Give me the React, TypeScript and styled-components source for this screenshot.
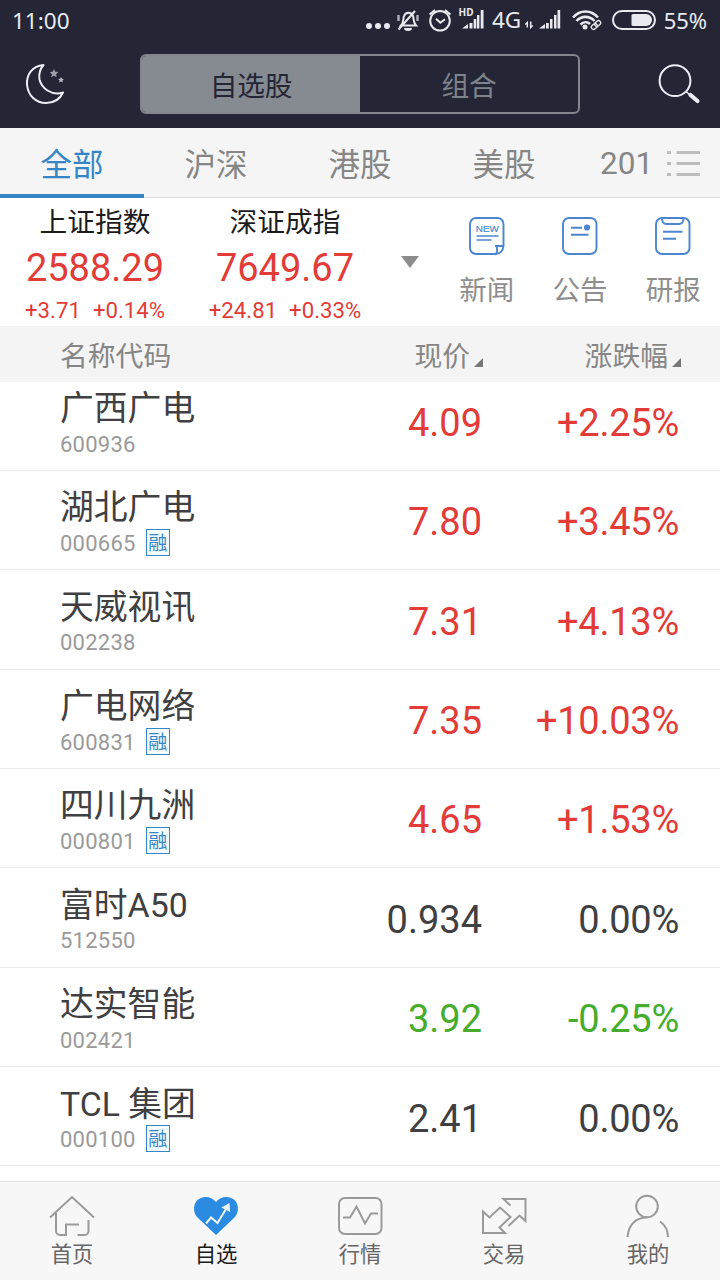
import React from 'react';
import styled, { createGlobalStyle } from 'styled-components';

const GlobalStyle = createGlobalStyle`
  * { box-sizing: border-box; }
  body { margin: 0; background: #fff; }
`;

const RED = '#e23b38';
const GREEN = '#45ad2b';
const DARK = '#404042';
const BLUE = '#3486c6';

const Screen = styled.div`
  width: 720px;
  height: 1280px;
  display: flex;
  flex-direction: column;
  overflow: hidden;
  background: #fff;
  font-family: Roboto, 'Noto Sans CJK SC', sans-serif;
`;

const StatusBar = styled.header`
  height: 40px;
  flex: none;
  display: flex;
  align-items: center;
  justify-content: space-between;
  padding: 2px 13px 0 12px;
  background: #242636;
  color: #e9eaf0;
  font: 22.5px/38px 'Noto Sans', sans-serif;
`;

const StatusIcons = styled.div`
  display: flex;
  align-items: center;
  height: 38px;
`;

const Battery = styled.span`
  height: 38px;
  font-size: 22px;
  line-height: 36px;
  letter-spacing: -0.1px;
  margin-left: 2px;
`;

const NavBar = styled.nav`
  height: 88px;
  flex: none;
  display: flex;
  align-items: center;
  padding: 0 17px 0 23px;
  background: #242636;
`;

const Segmented = styled.div`
  display: flex;
  flex: none;
  width: 440px;
  height: 60px;
  margin: 0 77px 0 73px;
  border: 2px solid #82868e;
  border-radius: 6px;
  overflow: hidden;
`;

const Segment = styled.div<{ $on?: boolean }>`
  flex: 1;
  text-align: center;
  font-size: 27.7px;
  line-height: 61px;
  letter-spacing: -0.2px;
  background: ${(p) => (p.$on ? '#868a91' : 'transparent')};
  color: ${(p) => (p.$on ? '#242636' : '#7f838c')};
`;

const Tabs = styled.div`
  height: 70px;
  flex: none;
  display: flex;
  background: #f5f5f5;
  border-bottom: 1px solid #dedede;
`;

const Tab = styled.div<{ $on?: boolean }>`
  width: 144px;
  height: 70px;
  text-align: center;
  font-size: 31.5px;
  line-height: 75px;
  color: ${(p) => (p.$on ? BLUE : '#868686')};
  border-bottom: ${(p) => (p.$on ? `4px solid ${BLUE}` : '0')};
`;

const LastTab = styled.div`
  flex: 1;
  display: flex;
  align-items: center;
  justify-content: space-between;
  padding: 3px 20px 0 24px;
  font-size: 31.5px;
  line-height: 66px;
  color: #868686;
`;

const Summary = styled.section`
  height: 128px;
  flex: none;
  display: flex;
  background: #fff;
`;

const IndexCard = styled.div`
  width: 190px;
  display: flex;
  flex-direction: column;
  align-items: center;
  padding-top: 4px;
  color: ${RED};
`;

const IndexName = styled.div`
  font-size: 27.7px;
  line-height: 41px;
  color: #1c1c1c;
`;

const IndexValue = styled.div`
  font-size: 38px;
  line-height: 50px;
`;

const IndexDelta = styled.div`
  display: flex;
  gap: 12px;
  font-size: 22.2px;
  line-height: 35px;
`;

const Expander = styled.div`
  width: 60px;
  display: flex;
  justify-content: center;
  align-items: center;
`;

const Shortcut = styled.div`
  width: 93.3px;
  display: flex;
  flex-direction: column;
  align-items: center;
  padding-top: 18px;
  font-size: 27.5px;
  line-height: 40px;
  color: #8e8e8e;

  svg { margin-bottom: 15px; }
`;

const TableHead = styled.div`
  height: 56px;
  flex: none;
  display: flex;
  align-items: center;
  padding: 5px 39px 0 60px;
  background: #f4f4f4;
  color: #868686;
  font-size: 27.8px;
  line-height: 51px;
`;

const HeadName = styled.div`
  flex: 1;
`;

const HeadSort = styled.div<{ $w: number }>`
  width: ${(p) => p.$w}px;
  display: flex;
  justify-content: flex-end;
  align-items: baseline;
  gap: 4px;
`;

const List = styled.main`
  height: 799px;
  flex: none;
  overflow: hidden;
`;

const Rows = styled.div`
  margin-top: -10.5px;
`;

const Row = styled.div`
  height: 99.36px;
  display: flex;
  padding: 15.5px 41px 0 60px;
  border-bottom: 1.5px solid #ececec;
`;

const Stock = styled.div`
  flex: 1;
`;

const StockName = styled.div`
  font-size: 33.8px;
  line-height: 44px;
  color: ${DARK};
`;

const StockCode = styled.div`
  display: flex;
  align-items: center;
  gap: 10px;
  height: 26px;
  font-size: 22px;
  letter-spacing: 0.25px;
  color: #9a9a9a;
`;

const Badge = styled.span`
  width: 24px;
  height: 27px;
  margin-top: -2px;
  border: 1.5px solid ${BLUE};
  background: #f4fcff;
  color: ${BLUE};
  font-size: 19px;
  line-height: 27px;
  letter-spacing: 0;
  display: flex;
  justify-content: center;
`;

const Quote = styled.div<{ $w: number; $c: string }>`
  width: ${(p) => p.$w}px;
  text-align: right;
  font-size: 38px;
  line-height: 72px;
  color: ${(p) => p.$c};
`;

const Change = styled(Quote)`
  letter-spacing: -0.25px;
`;

const BottomBar = styled.footer`
  flex: 1;
  display: flex;
  background: #f7f7f7;
  border-top: 1px solid #dfdfdf;
`;

const BottomItem = styled.div<{ $on?: boolean }>`
  width: 144px;
  display: flex;
  flex-direction: column;
  align-items: center;
  padding-top: 12px;
  font-size: 21.3px;
  line-height: 28px;
  color: ${(p) => (p.$on ? '#1b1b1b' : '#666')};

  svg { margin-bottom: 3px; }
`;

const StatusGlyphs = () => (
  <>
    <svg width="142" height="38" viewBox="365 2 142 38" fill="none" stroke="#e9eaf0" strokeWidth="2">
      <g fill="#e9eaf0" stroke="none">
        <circle cx="369" cy="26" r="3" />
        <circle cx="378" cy="26" r="3" />
        <circle cx="387" cy="26" r="3" />
        <path d="M404 28h8a4 3 0 0 1-8 0z" />
      </g>
      <path d="M401 25.500c3-3 2-7 3-9.500c1.500-4.500 7.500-4.500 9 0c1 3 0 6.500 3 9.500zM398.500 29.500L415 11" />
      <path d="M398.500 15v6M417.500 15v6" stroke="#a9abb5" strokeWidth="2.500" />
      <circle cx="440" cy="20.800" r="9.800" />
      <path d="M436 18.800l4.300 3.900 4.700-3.500M429.500 14.500l5.500-4.500M450.500 14.500l-5.500-4.500" />
      <g fill="#e9eaf0" stroke="none">
        <path d="M462 28.500l6-4.500v4.500zM469.500 23h3v5.500h-3zM473.700 19h2.600v9.500h-2.600zM477 15h2.400v13.500h-2.400zM480.700 10h2.800v18.500h-2.800z" />
        <text x="458.500" y="16" fontSize="10" fontWeight="700" fontFamily="Noto Sans">HD</text>
      </g>
    </svg>
    <svg width="155" height="38" viewBox="507 2 155 38" fill="none" stroke="#e9eaf0" strokeWidth="2" overflow="visible">
      <g fill="#e9eaf0" stroke="none">
        <text x="492" y="28" fontSize="22.500" fontFamily="Noto Sans">4G</text>
        <path d="M539 28.500l6-4.500v4.500zM546 23h2.800v5.500h-2.800zM550 19h2.500v9.500h-2.500zM554 15h2.500v13.500h-2.500zM557.500 10h2.700v18.500h-2.700z" />
        <circle cx="585" cy="27" r="2.500" />
      </g>
      <path strokeWidth="1.500" d="M527.300 27.500v-5l-2 2M530.700 21.500v6l2-2" />
      <path strokeWidth="2.600" d="M573 17.500c7-8 18-8 25 0M576.500 21c5-5.500 13-5.500 18 0M580.500 24.500c3-3 7-3 9.500-.5" />
      <g strokeWidth="1.300" transform="rotate(-42 596 25)">
        <rect x="590.500" y="22.800" width="6.500" height="4.400" rx="2.200" />
        <rect x="595" y="22.800" width="6.500" height="4.400" rx="2.200" />
      </g>
      <rect x="613" y="11" width="42" height="18" rx="9" />
      <path d="M633 14h13a6 6 0 0 1 0 12h-13a1.500 1.500 0 0 1-1.500-1.500v-9a1.500 1.500 0 0 1 1.500-1.500z" fill="#e9eaf0" stroke="none" />
    </svg>
  </>
);

const MoonIcon = () => (
  <svg width="44" height="44" viewBox="23 62 44 44" fill="none" stroke="#eceef5" strokeWidth="2" strokeLinejoin="round">
    <path d="M43.500 65C31 66 26.500 76 27 84.500C28 96 36 103 46 103C54 103 60 99 63 92.500C51 96 41.500 88 39.500 79.500C38.500 73.500 40.500 68.500 43.500 65z" />
    <path fill="#9a9ca6" stroke="none" d="M54 69l1.300 2.700 3 .4-2.200 2.100.6 3-2.700-1.500-2.700 1.500.6-3-2.200-2.100 3-.4z" />
    <path fill="#b9bbc5" stroke="none" d="M61 77l.9 1.800 2 .3-1.500 1.400.4 2.100-1.800-1-1.800 1 .4-2.100-1.500-1.400 2-.3z" />
  </svg>
);

const SearchIcon = () => (
  <svg width="46" height="46" viewBox="656.500 61 46 46" fill="none" stroke="#eceef5">
    <circle cx="674.500" cy="80.700" r="15.400" strokeWidth="2" />
    <path d="M690 95l7 6" strokeWidth="4.200" strokeLinecap="round" />
    <path d="M685.500 91.500l4 3.500" strokeWidth="1.600" />
  </svg>
);

const MenuIcon = () => (
  <svg width="33" height="28" viewBox="0 0 33 28" fill="#bdbdbd">
    <path d="M0 1h4v3H0zM9.500 1H33v3H9.500zM0 12h4v3H0zM9.500 12H33v3H9.500zM0 23h4v3H0zM9.500 23H33v3H9.500z" />
  </svg>
);

const SortMark = () => (
  <svg width="9" height="9" viewBox="0 0 9 9" overflow="visible">
    <path d="M9 1v9H0z" fill="#777" />
  </svg>
);

const NewsIcon = () => (
  <svg width="38" height="40" viewBox="0 0 38 40" fill="none" stroke="#4a86cf" strokeWidth="1.900">
    <path d="M28 38H8a6 6 0 0 1-6-6V8a6 6 0 0 1 6-6h21.500a6 6 0 0 1 6 6v22c-.5 4.500-3 7.500-7.500 8c1.500-2.500 1.500-5 .5-8M27 30h8.500" />
    <path d="M8.500 20h22M8.500 24h15" strokeWidth="1.400" />
    <text x="7.800" y="15.800" fontSize="9.900" textLength="23" lengthAdjust="spacingAndGlyphs" fontFamily="Liberation Sans" fill="#4a86cf" stroke="#4a86cf" strokeWidth=".2">NEW</text>
  </svg>
);

const NoticeIcon = () => (
  <svg width="38" height="40" viewBox="0 0 38 40" fill="none" stroke="#4a86cf" strokeWidth="1.900">
    <rect x="2" y="2" width="33.500" height="36" rx="6" />
    <path d="M10 11.700h11M10 18.800h17.500" />
    <circle cx="26" cy="11.500" r="3.100" fill="#4a86cf" stroke="none" />
  </svg>
);

const ReportIcon = () => (
  <svg width="38" height="40" viewBox="0 0 38 40" fill="none" stroke="#4a86cf" strokeWidth="1.900">
    <rect x="2" y="2" width="33.500" height="36" rx="6" />
    <path d="M8 2.500c0 3.500 1.500 5.500 4.500 5.500h12.500c3 0 4.500-2 4.500-5.500M9 15.800h19.500M9 22.700h13" />
  </svg>
);

const navStroke = { fill: 'none', stroke: '#9a9a9a', strokeWidth: 2 };

const HomeIcon = () => (
  <svg width="46" height="44" viewBox="49 1194 46 44" {...navStroke}>
    <path d="M50 1217.500L72 1197l22 20.500M56 1213v18a4 4 0 0 0 4 4h6v-10.500h13M77.500 1235h7a4 4 0 0 0 4-4v-11" />
  </svg>
);

const HeartIcon = () => (
  <svg width="46" height="44" viewBox="193 1194 46 44">
    <path fill="#2a8be0" d="M216 1235L197.500 1217.500C193 1213 193 1204.500 197 1200.500C202 1195.500 211 1195.500 216 1202C221 1195.500 230 1195.500 235 1200.500C239 1204.500 239 1213 234.500 1217.500z" />
    <path fill="none" stroke="#eef7ff" strokeWidth="2" d="M206 1223.500l5-6 6.500 5.500 10-16.500" />
    <path fill="#eef7ff" d="M229.500 1203l.5 9-8.500-4.500z" />
  </svg>
);

const MarketIcon = () => (
  <svg width="46" height="44" viewBox="337 1194 46 44" {...navStroke}>
    <rect x="339" y="1198" width="42.500" height="36" rx="6" />
    <path d="M343 1217.500h7l6.500-11 8.500 17 6-10h7" />
  </svg>
);

const TradeIcon = () => (
  <svg width="46" height="44" viewBox="481 1194 46 44" {...navStroke}>
    <path d="M510.500 1205.500L503.500 1199H525.500V1221L519.500 1215.500L508.500 1226M483 1211.500V1233H505L499.500 1227.500L510.500 1217L500 1207.500L489.500 1217.500z" />
  </svg>
);

const UserIcon = () => (
  <svg width="46" height="44" viewBox="625 1194 46 44" {...navStroke}>
    <circle cx="647" cy="1206.500" r="10.800" />
    <path d="M627.500 1237c1-12 8-19.500 19.500-19.500M660 1221.500c5 3.500 8 9 8 15.500" />
  </svg>
);

const indices = [
  { name: '上证指数', value: '2588.29', diff: '+3.71', pct: '+0.14%' },
  { name: '深证成指', value: '7649.67', diff: '+24.81', pct: '+0.33%' },
];

const shortcuts = [
  { label: '新闻', Icon: NewsIcon },
  { label: '公告', Icon: NoticeIcon },
  { label: '研报', Icon: ReportIcon },
];

const stocks = [
  { name: '广西广电', code: '600936', price: '4.09', change: '+2.25%', margin: false, color: RED },
  { name: '湖北广电', code: '000665', price: '7.80', change: '+3.45%', margin: true, color: RED },
  { name: '天威视讯', code: '002238', price: '7.31', change: '+4.13%', margin: false, color: RED },
  { name: '广电网络', code: '600831', price: '7.35', change: '+10.03%', margin: true, color: RED },
  { name: '四川九洲', code: '000801', price: '4.65', change: '+1.53%', margin: true, color: RED },
  { name: '富时A50', code: '512550', price: '0.934', change: '0.00%', margin: false, color: DARK },
  { name: '达实智能', code: '002421', price: '3.92', change: '-0.25%', margin: false, color: GREEN },
  { name: 'TCL 集团', code: '000100', price: '2.41', change: '0.00%', margin: true, color: DARK },
];

const bottomItems = [
  { label: '首页', Icon: HomeIcon },
  { label: '自选', Icon: HeartIcon, on: true },
  { label: '行情', Icon: MarketIcon },
  { label: '交易', Icon: TradeIcon },
  { label: '我的', Icon: UserIcon },
];

export default function App() {
  return (
    <Screen>
      <GlobalStyle />
      <StatusBar>
        <span>11:00</span>
        <StatusIcons>
          <StatusGlyphs />
          <Battery>55%</Battery>
        </StatusIcons>
      </StatusBar>
      <NavBar>
        <MoonIcon />
        <Segmented>
          <Segment $on>自选股</Segment>
          <Segment>组合</Segment>
        </Segmented>
        <SearchIcon />
      </NavBar>
      <Tabs>
        <Tab $on>全部</Tab>
        <Tab>沪深</Tab>
        <Tab>港股</Tab>
        <Tab>美股</Tab>
        <LastTab>
          201
          <MenuIcon />
        </LastTab>
      </Tabs>
      <Summary>
        {indices.map((i) => (
          <IndexCard key={i.name}>
            <IndexName>{i.name}</IndexName>
            <IndexValue>{i.value}</IndexValue>
            <IndexDelta>
              <span>{i.diff}</span>
              <span>{i.pct}</span>
            </IndexDelta>
          </IndexCard>
        ))}
        <Expander>
          <svg width="18" height="12" viewBox="0 0 18 12">
            <path d="M0 0h18l-9 12z" fill="#8c8c8c" />
          </svg>
        </Expander>
        {shortcuts.map(({ label, Icon }) => (
          <Shortcut key={label}>
            <Icon />
            {label}
          </Shortcut>
        ))}
      </Summary>
      <TableHead>
        <HeadName>名称代码</HeadName>
        <HeadSort $w={160}>现价<SortMark /></HeadSort>
        <HeadSort $w={198}>涨跌幅<SortMark /></HeadSort>
      </TableHead>
      <List>
        <Rows>
          {stocks.map((s) => (
            <Row key={s.code}>
              <Stock>
                <StockName>{s.name}</StockName>
                <StockCode>
                  {s.code}
                  {s.margin && <Badge>融</Badge>}
                </StockCode>
              </Stock>
              <Quote $w={160} $c={s.color}>{s.price}</Quote>
              <Change $w={197} $c={s.color}>{s.change}</Change>
            </Row>
          ))}
        </Rows>
      </List>
      <BottomBar>
        {bottomItems.map(({ label, Icon, on }) => (
          <BottomItem key={label} $on={on}>
            <Icon />
            {label}
          </BottomItem>
        ))}
      </BottomBar>
    </Screen>
  );
}
